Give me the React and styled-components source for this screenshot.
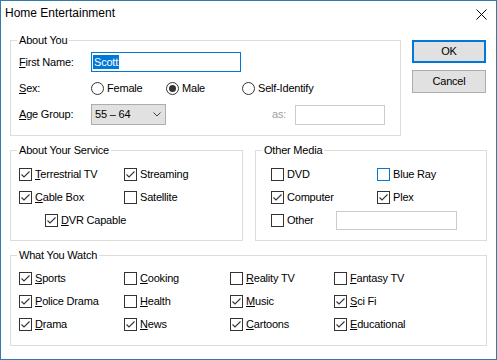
import React from "react";
import styled, { createGlobalStyle } from "styled-components";

const Global = createGlobalStyle`
  html, body { margin: 0; padding: 0; background: #fff; }
  * { box-sizing: border-box; }
`;

const Window = styled.div`
  width: 497px;
  height: 360px;
  border: 1px solid #2f7ca6;
  background: #fff;
  display: flex;
  flex-direction: column;
  font-family: "Liberation Sans", Arial, sans-serif;
  font-size: 11px;
  line-height: 13px;
  letter-spacing: -0.2px;
  color: #000;
`;

const TitleBar = styled.div`
  height: 30px;
  flex: none;
  display: flex;
  align-items: flex-start;
  justify-content: space-between;
  padding: 5px 9px 0 4px;
`;

const Title = styled.div`
  font-size: 12px;
  line-height: 14px;
  letter-spacing: 0;
`;

const CloseIcon = styled.svg`
  margin-top: 3px;
  display: block;
`;

const Body = styled.div`
  display: grid;
  grid-template-columns: 391px 75px;
  column-gap: 11px;
  row-gap: 8px;
  padding: 3px 9px 0 9px;
  align-items: start;
`;

const Group = styled.fieldset`
  margin: 0;
  padding: 0;
  min-width: 0;
  border: 1px solid #dcdcdc;
  grid-column: ${(p) => (p.$span ? "1 / -1" : "auto")};
  width: ${(p) => (p.$w ? `${p.$w}px` : "auto")};
  flex: ${(p) => (p.$w ? "none" : "1")};
`;

const Caption = styled.legend`
  margin-left: 6px;
  padding: 0 2px;
  line-height: 13px;
`;

const ButtonColumn = styled.div`
  display: flex;
  flex-direction: column;
  gap: 7px;
  padding-top: 6px;
`;

const Button = styled.button`
  width: 74px;
  height: 23px;
  padding: 0;
  background: #e1e1e1;
  border: ${(p) => (p.$default ? "2px solid #0078d7" : "1px solid #adadad")};
  font: inherit;
  letter-spacing: inherit;
  color: #000;
`;

const FormBody = styled.div`
  display: flex;
  flex-direction: column;
  gap: 6px;
  padding: 5px 8px 10px 8px;
`;

const FormRow = styled.div`
  display: flex;
  align-items: center;
  height: ${(p) => p.$h}px;
`;

const FieldLabel = styled.div`
  width: 72px;
  flex: none;
`;

const TextBox = styled.div`
  width: ${(p) => p.$w}px;
  height: ${(p) => p.$h}px;
  flex: none;
  background: #fff;
  border: 1px solid ${(p) => (p.$focus ? "#0078d7" : "#cccccc")};
  padding: 2px 1px;
  margin-left: ${(p) => p.$ml || 0}px;
`;

const Selection = styled.span`
  display: inline-block;
  height: 14px;
  line-height: 14px;
  padding: 0 1px;
  background: #0078d7;
  color: #fff;
`;

const RadioOption = styled.div`
  display: flex;
  align-items: center;
  gap: 3px;
  width: ${(p) => p.$w}px;
  flex: none;
`;

const RadioCircle = styled.span`
  width: 13px;
  height: 13px;
  flex: none;
  border-radius: 50%;
  border: 1px solid #333;
  background: #fff;
  display: flex;
  align-items: center;
  justify-content: center;
  &::after {
    content: "";
    display: ${(p) => (p.$on ? "block" : "none")};
    width: 7px;
    height: 7px;
    border-radius: 50%;
    background: #333;
  }
`;

const Combo = styled.div`
  width: 75px;
  height: 21px;
  flex: none;
  background: #e1e1e1;
  border: 1px solid #adadad;
  display: flex;
  align-items: center;
  justify-content: space-between;
  padding: 0 4px 0 3px;
`;

const DisabledLabel = styled.div`
  color: #a0a0a0;
  width: 23px;
  margin-left: 106px;
  flex: none;
`;

const CheckGrid = styled.div`
  display: grid;
  grid-template-columns: ${(p) => p.$cols};
  grid-auto-rows: 17px;
  row-gap: 6px;
  padding: ${(p) => p.$pad};
`;

const CheckItem = styled.div`
  display: flex;
  align-items: center;
  gap: 3px;
  width: ${(p) => (p.$w ? `${p.$w}px` : "auto")};
  flex: none;
  grid-column: ${(p) => (p.$span ? "1 / -1" : "auto")};
  margin-left: ${(p) => p.$indent || 0}px;
`;

const Box = styled.span`
  width: 13px;
  height: 13px;
  flex: none;
  border: 1px solid ${(p) => (p.$hover ? "#0078d7" : "#333")};
  background: #fff;
  display: block;
`;

const OtherRow = styled.div`
  grid-column: 1 / -1;
  display: flex;
  align-items: center;
`;

const ServiceRow = styled.div`
  grid-column: 1 / -1;
  display: flex;
  gap: 12px;
`;

const Under = styled.span`
  text-decoration: underline;
  text-underline-offset: 1px;
`;

function Mn({ text, u }) {
  if (!u) return <span>{text}</span>;
  return (
    <span>
      <Under>{text[0]}</Under>
      {text.slice(1)}
    </span>
  );
}

function Check({ label, on, u, hover, ...rest }) {
  return (
    <CheckItem {...rest}>
      <Box $hover={hover}>
        {on && (
          <svg width="11" height="11" viewBox="0 0 11 11">
            <polyline
              points="1.5,5.5 4,8 9.5,2.5"
              fill="none"
              stroke="#333"
              strokeWidth="1.1"
            />
          </svg>
        )}
      </Box>
      <Mn text={label} u={u} />
    </CheckItem>
  );
}

function Radio({ label, on, w }) {
  return (
    <RadioOption $w={w}>
      <RadioCircle $on={on} />
      <span>{label}</span>
    </RadioOption>
  );
}

const watch = [
  ["Sports", true],
  ["Cooking", false],
  ["Reality TV", false],
  ["Fantasy TV", false],
  ["Police Drama", true],
  ["Health", false],
  ["Music", true],
  ["Sci Fi", true],
  ["Drama", true],
  ["News", true],
  ["Cartoons", true],
  ["Educational", true],
];

export default function App() {
  return (
    <>
      <Global />
      <Window>
        <TitleBar>
          <Title>Home Entertainment</Title>
          <CloseIcon width="11" height="11" viewBox="0 0 11 11">
            <path d="M0.5 0.5 L10.5 10.5 M10.5 0.5 L0.5 10.5" stroke="#000" strokeWidth="1" />
          </CloseIcon>
        </TitleBar>
        <Body>
          <Group>
            <Caption>About You</Caption>
            <FormBody>
              <FormRow $h={20}>
                <FieldLabel>
                  <Mn text="First Name:" u />
                </FieldLabel>
                <TextBox $w={150} $h={20} $focus>
                  <Selection>Scott</Selection>
                </TextBox>
              </FormRow>
              <FormRow $h={20}>
                <FieldLabel>
                  <Mn text="Sex:" u />
                </FieldLabel>
                <Radio label="Female" w={75} />
                <Radio label="Male" w={76} on />
                <Radio label="Self-Identify" w={80} />
              </FormRow>
              <FormRow $h={21}>
                <FieldLabel>
                  <Mn text="Age Group:" u />
                </FieldLabel>
                <Combo>
                  <span>55 – 64</span>
                  <svg width="8" height="5" viewBox="0 0 8 5">
                    <polyline points="0.5,0.5 4,4 7.5,0.5" fill="none" stroke="#444" strokeWidth="1" />
                  </svg>
                </Combo>
                <DisabledLabel>as:</DisabledLabel>
                <TextBox $w={90} $h={20} />
              </FormRow>
            </FormBody>
          </Group>
          <ButtonColumn>
            <Button $default>OK</Button>
            <Button>Cancel</Button>
          </ButtonColumn>
          <ServiceRow>
            <Group $w={233}>
              <Caption>About Your Service</Caption>
              <CheckGrid $cols="105px 1fr" $pad="9px 8px 11px 8px">
                <Check label="Terrestrial TV" on u />
                <Check label="Streaming" on />
                <Check label="Cable Box" on u />
                <Check label="Satellite" />
                <Check label="DVR Capable" on u $span $indent={26} />
              </CheckGrid>
            </Group>
            <Group>
              <Caption>Other Media</Caption>
              <CheckGrid $cols="106px 1fr" $pad="9px 8px 11px 15px">
                <Check label="DVD" />
                <Check label="Blue Ray" hover />
                <Check label="Computer" on />
                <Check label="Plex" on />
                <OtherRow>
                  <Check label="Other" $w={65} />
                  <TextBox $w={121} $h={19} />
                </OtherRow>
              </CheckGrid>
            </Group>
          </ServiceRow>
          <Group $span>
            <Caption>What You Watch</Caption>
            <CheckGrid $cols="105px 106px 104px 1fr" $pad="8px 8px 12px 8px">
              {watch.map(([l, on]) => (
                <Check key={l} label={l} on={on} u />
              ))}
            </CheckGrid>
          </Group>
        </Body>
      </Window>
    </>
  );
}
